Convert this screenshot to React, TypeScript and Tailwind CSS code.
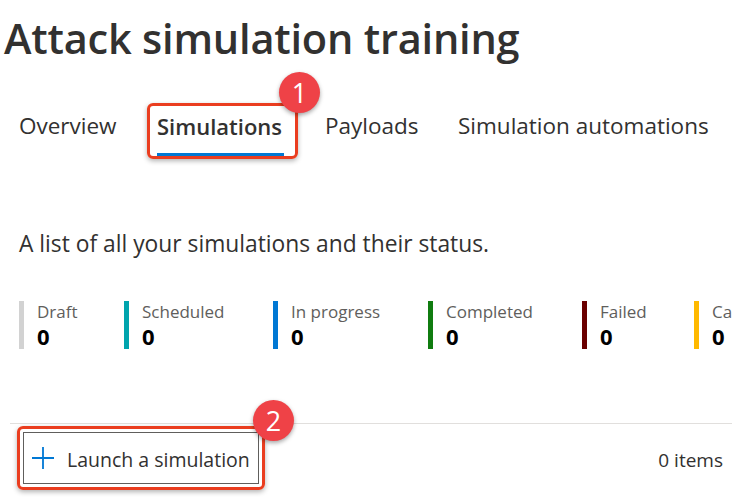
const tabs = [
  { label: 'Overview', width: 'w-[138px]' },
  { label: 'Simulations', width: 'w-[168px]', active: true },
  { label: 'Payloads', width: 'w-[133px]' },
  { label: 'Simulation automations', width: 'w-auto' },
];

const stats = [
  { label: 'Draft', bar: 'bg-[#d2d2d2]', width: 'w-[105px]' },
  { label: 'Scheduled', bar: 'bg-[#00a4ad]', width: 'w-[149px]' },
  { label: 'In progress', bar: 'bg-[#0078d4]', width: 'w-[155px]' },
  { label: 'Completed', bar: 'bg-[#107c10]', width: 'w-[154px]' },
  { label: 'Failed', bar: 'bg-[#6b0000]', width: 'w-[112px]' },
  { label: 'Canceled', bar: 'bg-[#ffb900]', width: 'w-[120px]' },
];

function Badge({ n, className }: { n: number; className: string }) {
  return (
    <span
      className={`absolute h-[41px] w-[41px] rounded-full bg-[#ef4247] text-white text-[27px] leading-none flex items-center justify-center shadow-[0_2px_4px_rgba(0,0,0,0.35)] ${className}`}
    >
      {n}
    </span>
  );
}

export default function App() {
  return (
    <div className="relative h-[501px] w-[732px] overflow-hidden bg-white font-['Open_Sans','Noto_Sans',sans-serif] text-[#323130]">
      {/* Title */}
      <h1 className="pl-[4px] pt-[14px] text-[41.5px] font-semibold leading-[48px] tracking-[-0.2px] whitespace-nowrap">
        Attack simulation training
      </h1>

      {/* Tabs */}
      <div className="mt-[41px] flex h-[56px] pl-[19px] whitespace-nowrap">
        {tabs.map((tab) => (
          <div key={tab.label} className={`${tab.width} shrink-0`}>
            {tab.active ? (
              <div className="relative -ml-[10px] w-[151px]">
                <div className="absolute inset-0 rounded-[6px] border-[3px] border-[#ea3d1f] shadow-[0_2px_5px_rgba(0,0,0,0.3)]" />
                <div className="flex flex-col pl-[10px] pt-[8px]">
                  <span className="text-[22px] font-semibold leading-[30px]">{tab.label}</span>
                  <span className="mt-[12px] h-[3px] w-[127px] bg-[#0078d4]" />
                  <span className="h-[3px]" />
                </div>
                <Badge n={1} className="-right-[22px] -top-[31px]" />
              </div>
            ) : (
              <div className="pt-[8px] text-[22.5px] leading-[30px]">{tab.label}</div>
            )}
          </div>
        ))}
      </div>

      {/* Description */}
      <p className="mt-[71px] pl-[19px] text-[22.8px] leading-[28px] whitespace-nowrap">
        A list of all your simulations and their status.
      </p>

      {/* Status counters */}
      <div className="mt-[43px] flex pl-[19px] whitespace-nowrap">
        {stats.map((s) => (
          <div key={s.label} className={`${s.width} flex h-[48px] shrink-0`}>
            <span className={`${s.bar} w-[5px] h-full`} />
            <div className="pl-[13px] flex flex-col">
              <span className="text-[17px] leading-[22px] text-[#605e5c]">{s.label}</span>
              <span className="text-[22px] font-bold leading-[26px] text-black">0</span>
            </div>
          </div>
        ))}
      </div>

      {/* Command bar */}
      <div className="mt-[74px] ml-[10px] border-t border-[#e1dfdd]">
        <div className="flex items-center justify-between pr-[9px]">
          <div className="relative ml-[7px] mt-[2px] rounded-[6px] border-[3px] border-[#ea3d1f] p-[3px] shadow-[0_2px_5px_rgba(0,0,0,0.3)]">
            <button className="flex h-[52px] w-[236px] items-center gap-[12px] border border-[#605e5c] pl-[7px] text-[19.5px] text-[#323130]">
              <svg width="24" height="24" viewBox="0 0 24 24" className="shrink-0">
                <path d="M12 1v22M1 12h22" stroke="#0078d4" strokeWidth="1.8" fill="none" />
              </svg>
              <span className="pt-[4px]">Launch a simulation</span>
            </button>
            <Badge n={2} className="-right-[32px] -top-[29px]" />
          </div>
          <span className="mt-[6px] text-[19px] text-[#323130]">0 items</span>
        </div>
      </div>
    </div>
  );
}
